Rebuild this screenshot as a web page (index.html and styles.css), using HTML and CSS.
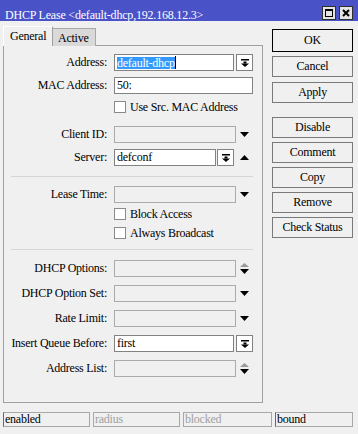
FILE: index.html
```html
<!DOCTYPE html>
<html>
<head>
<meta charset="utf-8">
<link rel="stylesheet" href="styles.css">
</head>
<body>
<div class="win">
  <div class="titlebar">
    <span class="title">DHCP Lease &lt;default-dhcp,192.168.12.3&gt;</span>
    <div class="tbtns">
      <span class="tbtn"><svg width="8" height="8" viewBox="0 0 8 8"><rect x="0.5" y="0.5" width="7" height="7" fill="none" stroke="#000"/><rect x="0" y="0" width="8" height="2" fill="#000"/></svg></span>
      <span class="tbtn"><svg width="8" height="8" viewBox="0 0 8 8"><path d="M1 1L7 7M7 1L1 7" stroke="#000" stroke-width="2"/></svg></span>
    </div>
  </div>
  <div class="main">
    <div class="left">
      <div class="tabs">
        <div class="tab sel">General</div>
        <div class="tab">Active</div>
      </div>
      <div class="panel">
        <div class="row g8">
          <span class="lbl">Address:</span>
          <div class="ctl">
            <div class="fld edit w120"><span class="hl">default-dhcp</span><span class="caret"></span></div>
            <span class="ddb"><svg width="8" height="8" viewBox="0 0 8 8"><rect x="0" y="0" width="8" height="1.5" fill="#000"/><rect x="2.5" y="2.5" width="3" height="2" fill="#000"/><path d="M0 4.5H8L4 8Z" fill="#000"/></svg></span>
          </div>
        </div>
        <div class="row g6">
          <span class="lbl">MAC Address:</span>
          <div class="ctl">
            <div class="fld edit w139">50:</div>
          </div>
        </div>
        <div class="cbrow g7"><span class="cb"></span><span>Use Src. MAC Address</span></div>
        <div class="row g13">
          <span class="lbl">Client ID:</span>
          <div class="ctl">
            <div class="fld w122"></div>
            <span class="arr"><svg width="9" height="5" viewBox="0 0 9 5"><path d="M0 0H9L4.5 5Z" fill="#000"/></svg></span>
          </div>
        </div>
        <div class="row g6">
          <span class="lbl">Server:</span>
          <div class="ctl">
            <div class="fld edit w102">defconf</div>
            <span class="ddb srv"><svg width="8" height="8" viewBox="0 0 8 8"><rect x="0" y="0" width="8" height="1.5" fill="#000"/><rect x="2.5" y="2.5" width="3" height="2" fill="#000"/><path d="M0 4.5H8L4 8Z" fill="#000"/></svg></span>
            <span class="arr"><svg width="9" height="5" viewBox="0 0 9 5"><path d="M0 5H9L4.5 0Z" fill="#000"/></svg></span>
          </div>
        </div>
        <div class="sep g10"></div>
        <div class="row g9">
          <span class="lbl">Lease Time:</span>
          <div class="ctl">
            <div class="fld w122"></div>
            <span class="arr"><svg width="9" height="5" viewBox="0 0 9 5"><path d="M0 0H9L4.5 5Z" fill="#000"/></svg></span>
          </div>
        </div>
        <div class="cbrow g5"><span class="cb"></span><span>Block Access</span></div>
        <div class="cbrow g7"><span class="cb"></span><span>Always Broadcast</span></div>
        <div class="sep g10"></div>
        <div class="row g10">
          <span class="lbl">DHCP Options:</span>
          <div class="ctl">
            <div class="fld w122"></div>
            <span class="arr spin"><svg width="9" height="11" viewBox="0 0 9 11"><path d="M0 4H9L4.5 0Z" fill="#9a9a9a"/><path d="M0 6H9L4.5 11Z" fill="#000"/></svg></span>
          </div>
        </div>
        <div class="row g8">
          <span class="lbl">DHCP Option Set:</span>
          <div class="ctl">
            <div class="fld w122"></div>
            <span class="arr"><svg width="9" height="5" viewBox="0 0 9 5"><path d="M0 0H9L4.5 5Z" fill="#000"/></svg></span>
          </div>
        </div>
        <div class="row g8">
          <span class="lbl">Rate Limit:</span>
          <div class="ctl">
            <div class="fld w122"></div>
            <span class="arr"><svg width="9" height="5" viewBox="0 0 9 5"><path d="M0 0H9L4.5 5Z" fill="#000"/></svg></span>
          </div>
        </div>
        <div class="row g8">
          <span class="lbl">Insert Queue Before:</span>
          <div class="ctl">
            <div class="fld edit w120">first</div>
            <span class="ddb"><svg width="8" height="8" viewBox="0 0 8 8"><rect x="0" y="0" width="8" height="1.5" fill="#000"/><rect x="2.5" y="2.5" width="3" height="2" fill="#000"/><path d="M0 4.5H8L4 8Z" fill="#000"/></svg></span>
          </div>
        </div>
        <div class="row g8">
          <span class="lbl">Address List:</span>
          <div class="ctl">
            <div class="fld w122"></div>
            <span class="arr spin"><svg width="9" height="11" viewBox="0 0 9 11"><path d="M0 4H9L4.5 0Z" fill="#9a9a9a"/><path d="M0 6H9L4.5 11Z" fill="#000"/></svg></span>
          </div>
        </div>
      </div>
    </div>
    <div class="btns">
      <div class="btn ok">OK</div>
      <div class="btn b4">Cancel</div>
      <div class="btn b5">Apply</div>
      <div class="btn b14">Disable</div>
      <div class="btn b4">Comment</div>
      <div class="btn b4">Copy</div>
      <div class="btn b4">Remove</div>
      <div class="btn b4">Check Status</div>
    </div>
  </div>
  <div class="status">
    <div class="cell c87">enabled</div>
    <div class="cell c87 dim">radius</div>
    <div class="cell c89 dim">blocked</div>
    <div class="cell c78">bound</div>
  </div>
</div>
</body>
</html>
```
FILE: styles.css
```css
* { box-sizing: border-box; }
body { margin: 0; background: #f0f0f0; }
.win {
  width: 358px; height: 434px; background: #f0f0f0; overflow: hidden;
  font-family: "Liberation Serif", "Times New Roman", serif; font-size: 12px;
  letter-spacing: -0.25px; color: #000; display: flex; flex-direction: column;
}
.titlebar {
  height: 21px; flex: none; background: #4a52c7; color: #fff;
  display: flex; justify-content: space-between; align-items: flex-end;
  padding: 0 5px 0 5px;
}
.title { line-height: 12px; letter-spacing: -0.2px; white-space: nowrap; }
.tbtns { display: flex; gap: 3px; align-self: flex-start; margin-top: 6px; }
.tbtn {
  width: 14px; height: 14px; background: #e4e4e4; border: 1px solid #303030;
  display: flex; align-items: center; justify-content: center;
}
.main { display: flex; flex: none; }
.left { width: 263px; padding: 5px 0 0 3px; }
.tabs { display: flex; align-items: flex-end; height: 20px; position: relative; z-index: 1; }
.tab {
  height: 18px; padding: 0 6px 0 5px; background: #d9d9d9;
  border-top: 1px solid #a8a8a8; border-right: 1px solid #a8a8a8;
  display: flex; align-items: center; padding-top: 2px;
}
.tab.sel {
  height: 20px; width: 50px; padding: 0 0 0 6px; background: #f0f0f0;
  border-top: 1px solid #fff; border-left: 1px solid #fff; border-right: 1px solid #a0a0a0;
  padding-bottom: 1px;
}
.panel {
  width: 260px; height: 358px; border: 1px solid #a0a0a0; margin-top: -1px;
  display: flex; flex-direction: column;
}
.row { height: 17px; display: flex; align-items: center; flex: none; }
.lbl { width: 103px; text-align: right; margin-right: 7px; white-space: nowrap; }
.ctl { width: 139px; height: 17px; display: flex; align-items: center; }
.fld {
  height: 17px; border: 1px solid #ababab; background: #f0f0f0;
  padding-left: 2px; display: flex; align-items: center; white-space: nowrap;
}
.fld.edit { background: #fff; border-color: #828282; }
.w120 { width: 120px; }
.w139 { width: 139px; }
.w122 { width: 122px; }
.w102 { width: 102px; }
.hl { background: #3399ff; color: #fff; line-height: 12px; height: 12px; display: inline-block; }
.caret { width: 1px; height: 13px; background: #000; }
.ddb {
  width: 17px; height: 17px; margin-left: 2px; background: #fff; border: 1px solid #828282;
  display: flex; align-items: center; justify-content: center;
}
.ddb.srv { margin-left: 1px; }
.arr { width: 17px; height: 17px; margin-left: auto; display: flex; align-items: center; justify-content: center; }
.arr.spin { padding-top: 0; }
.cbrow { height: 12px; display: flex; align-items: center; padding-left: 110px; flex: none; white-space: nowrap; }
.cb { width: 12px; height: 12px; border: 1px solid #8a8a8a; background: #fff; margin-right: 4px; flex: none; }
.sep { height: 1px; width: 242px; margin-left: 7px; background: #d5d5d5; flex: none; }
.g5 { margin-top: 5px; }
.g6 { margin-top: 6px; }
.g7 { margin-top: 7px; }
.g8 { margin-top: 8px; }
.g9 { margin-top: 9px; }
.g10 { margin-top: 10px; }
.g13 { margin-top: 13px; }
.btns { display: flex; flex-direction: column; width: 81px; margin-left: 9px; padding-top: 8px; }
.btn {
  height: 21px; border: 1px solid #7a7a7a; background: #f0f0f0;
  display: flex; align-items: center; justify-content: center; white-space: nowrap;
}
.btn.ok { height: 23px; border-color: #000; }
.b4 { margin-top: 4px; }
.b5 { margin-top: 5px; }
.b14 { margin-top: 14px; }
.status { display: flex; gap: 3px; padding-left: 3px; margin-top: 9px; flex: none; }
.cell {
  height: 15px; border: 1px solid #a8a8a8; border-left-color: #6a6a6a;
  padding-left: 1px; display: flex; align-items: center; white-space: nowrap;
}
.cell.dim { color: #a0a0a0; border-left-color: #a8a8a8; }
.c87 { width: 87px; }
.c89 { width: 89px; }
.c78 { width: 78px; }
```
